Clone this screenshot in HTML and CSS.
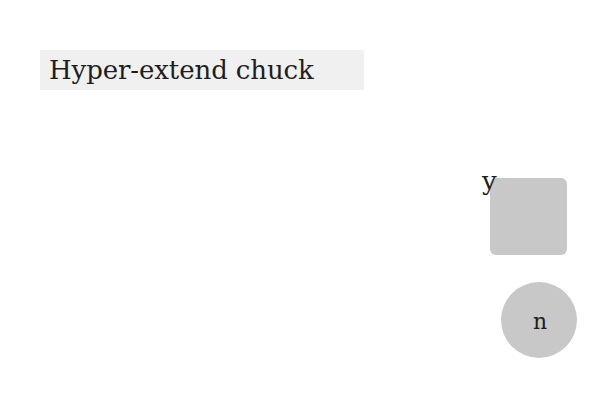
FILE: index.html
```html
<!DOCTYPE html>
<html>
<head>
<meta charset="utf-8">
<link rel="stylesheet" href="styles.css">
</head>
<body>
<div class="page">
  <div class="title">Hyper-extend chuck</div>
  <div class="controls">
    <div class="square-row">
      <div class="square"><span class="square-label">y</span></div>
    </div>
    <div class="circle-row">
      <div class="circle">n</div>
    </div>
  </div>
</div>
</body>
</html>
```
FILE: styles.css
```css
html, body {
  margin: 0;
  padding: 0;
  background: #ffffff;
}
.page {
  width: 600px;
  height: 400px;
  box-sizing: border-box;
  padding: 50px 0 0 40px;
  font-family: "DejaVu Serif", serif;
  color: #1e1e1e;
  display: flex;
  flex-direction: column;
}
.title {
  width: 324px;
  height: 40px;
  box-sizing: border-box;
  padding-left: 9px;
  background: #f0f0f0;
  font-size: 26px;
  line-height: 40px;
  letter-spacing: -0.1px;
}
.controls {
  display: flex;
  flex-direction: column;
  align-items: flex-end;
  padding-top: 88px;
  gap: 27px;
}
.square-row {
  padding-right: 33px;
}
.square {
  position: relative;
  width: 77px;
  height: 77px;
  border-radius: 6px;
  background: #c8c8c8;
}
.square-label {
  position: absolute;
  left: -8px;
  top: -12px;
  font-size: 26px;
  line-height: 30px;
}
.circle-row {
  padding-right: 23px;
}
.circle {
  width: 76px;
  height: 76px;
  border-radius: 50%;
  background: #c8c8c8;
  display: flex;
  align-items: center;
  justify-content: center;
  padding-top: 3px;
  padding-left: 2px;
  box-sizing: border-box;
  font-size: 22px;
}
```
